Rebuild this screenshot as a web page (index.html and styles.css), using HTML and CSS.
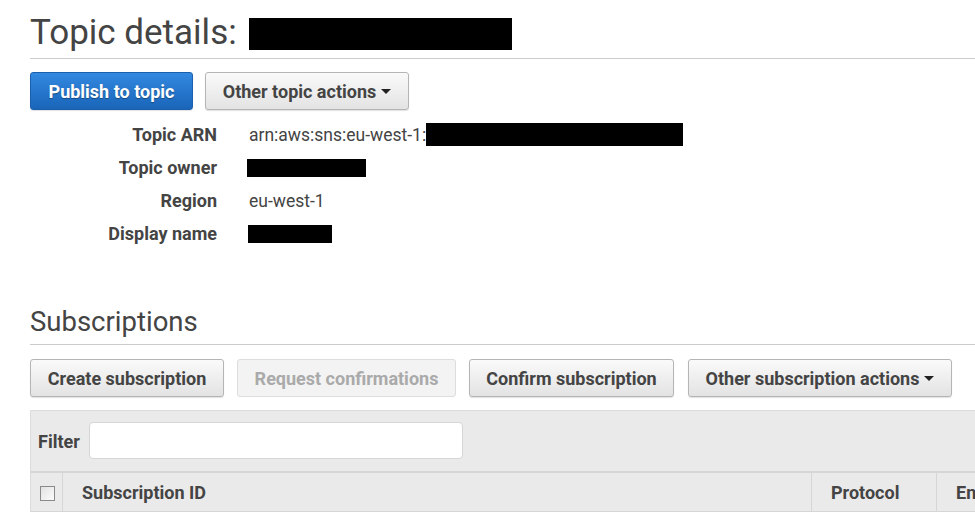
FILE: index.html
```html
<!DOCTYPE html>
<html>
<head>
<meta charset="utf-8">
<link rel="stylesheet" href="styles.css">
</head>
<body>
<div class="page">
  <h1 class="title">Topic details: <span class="redact redact-title"></span></h1>

  <div class="btn-row top-actions">
    <button class="btn btn-primary">Publish to topic</button>
    <button class="btn">Other topic actions <span class="caret"></span></button>
  </div>

  <dl class="details">
    <dt>Topic ARN</dt>
    <dd>arn:aws:sns:eu-west-1:<span class="redact redact-arn"></span></dd>
    <dt>Topic owner</dt>
    <dd><span class="redact redact-owner"></span></dd>
    <dt>Region</dt>
    <dd>eu-west-1</dd>
    <dt>Display name</dt>
    <dd><span class="redact redact-name"></span></dd>
  </dl>

  <h2 class="section-title">Subscriptions</h2>

  <div class="btn-row sub-actions">
    <button class="btn btn-create">Create subscription</button>
    <button class="btn btn-disabled" disabled>Request confirmations</button>
    <button class="btn btn-confirm">Confirm subscription</button>
    <button class="btn btn-other">Other subscription actions <span class="caret"></span></button>
  </div>

  <div class="panel">
    <div class="filter">
      <label class="filter-label">Filter</label>
      <input class="filter-input" type="text">
    </div>
    <div class="table-head">
      <div class="th th-check"><span class="checkbox"></span></div>
      <div class="th th-id">Subscription ID</div>
      <div class="th th-proto">Protocol</div>
      <div class="th th-endpoint">Endpoint</div>
    </div>
  </div>
</div>
</body>
</html>
```
FILE: styles.css
```css
html, body {
  margin: 0;
  padding: 0;
  background: #fff;
  overflow: hidden;
}
body {
  font-family: Roboto, "Liberation Sans", Arial, sans-serif;
  color: #444;
}
.page {
  padding-left: 30px;
}
.title {
  margin: 0;
  padding: 11px 0 4px;
  font-size: 35px;
  line-height: 43px;
  font-weight: 400;
  color: #444;
  border-bottom: 1px solid #ccc;
  white-space: nowrap;
}
.redact {
  display: inline-block;
  background: #000;
}
.redact-title {
  width: 263px;
  height: 32px;
  vertical-align: -6px;
  margin-left: 4px;
}
.btn-row {
  display: flex;
  align-items: center;
}
.top-actions {
  margin-top: 13px;
  gap: 12px;
}
.btn {
  height: 38px;
  padding: 0 10px;
  font-family: Roboto, "Liberation Sans", Arial, sans-serif;
  font-size: 18px;
  font-weight: 700;
  color: #444;
  background: linear-gradient(#fafafa, #e3e3e3);
  border: 1px solid #b5b5b5;
  border-radius: 3px;
  box-shadow: 0 1px 1px rgba(0,0,0,0.12);
  white-space: nowrap;
  display: inline-flex;
  align-items: center;
  justify-content: center;
}
.btn-primary {
  color: #fff;
  background: linear-gradient(#3389e0, #1965b9);
  border-color: #1c60ad;
  text-shadow: 0 1px 1px rgba(0,0,0,0.35);
  width: 163px;
}
.top-actions .btn:nth-child(2) {
  width: 204px;
}
.caret {
  display: inline-block;
  width: 0;
  height: 0;
  margin-left: 5px;
  border-left: 5px solid transparent;
  border-right: 5px solid transparent;
  border-top: 5px solid #222;
  vertical-align: middle;
}
.details {
  margin: 8px 0 0;
  display: grid;
  grid-template-columns: 187px 1fr;
  column-gap: 32px;
  grid-auto-rows: 33px;
  font-size: 17.5px;
}
.details dt {
  text-align: right;
  font-weight: 700;
  font-size: 18px;
  display: flex;
  align-items: center;
  justify-content: flex-end;
}
.details dd {
  margin: 0;
  display: flex;
  align-items: center;
  white-space: nowrap;
}
.redact-arn {
  width: 257px;
  height: 23px;
}
.redact-owner {
  width: 119px;
  height: 18px;
  margin-left: -2px;
}
.redact-name {
  width: 84px;
  height: 18px;
  margin-left: -1px;
}
.section-title {
  margin: 54px 0 0;
  padding-bottom: 5px;
  font-size: 27.5px;
  line-height: 35px;
  font-weight: 400;
  color: #444;
  border-bottom: 1px solid #ccc;
}
.sub-actions {
  margin-top: 14px;
  gap: 13px;
}
.btn-create { width: 194px; }
.btn-disabled {
  width: 219px;
  color: #aaa;
  background: #f3f3f3;
  border-color: #ddd;
  box-shadow: none;
}
.btn-confirm { width: 205px; }
.btn-other { width: 264px; margin-left: 1px; }
.panel {
  margin-top: 13px;
  background: #eaeaea;
  border-top: 1px solid #dcdcdc;
  border-left: 1px solid #dcdcdc;
}
.filter {
  display: flex;
  align-items: center;
  height: 60px;
  padding-left: 7px;
}
.filter-label {
  font-size: 18px;
  font-weight: 700;
  width: 51px;
}
.filter-input {
  width: 374px;
  height: 37px;
  box-sizing: border-box;
  border: 1px solid #d6d6d6;
  border-radius: 4px;
  background: #fff;
  margin: -2px 0 0;
}
.table-head {
  display: grid;
  grid-template-columns: 32px 749px 125px 1fr;
  border-top: 2px solid #d6d6d6;
  border-bottom: 1px solid #d6d6d6;
  height: 38px;
  font-size: 18px;
  font-weight: 700;
}
.th {
  display: flex;
  align-items: center;
  padding-left: 19px;
  white-space: nowrap;
  overflow: hidden;
  border-right: 1px solid #d6d6d6;
}
.th-check {
  padding-left: 9px;
  padding-top: 3px;
}
.th-proto { padding-left: 19px; }
.th-endpoint { border-right: none; }
.checkbox {
  display: inline-block;
  width: 13px;
  height: 13px;
  border: 1px solid #8a8a8a;
  background: linear-gradient(135deg, #e2e2e2, #fbfbfb);
}
```
